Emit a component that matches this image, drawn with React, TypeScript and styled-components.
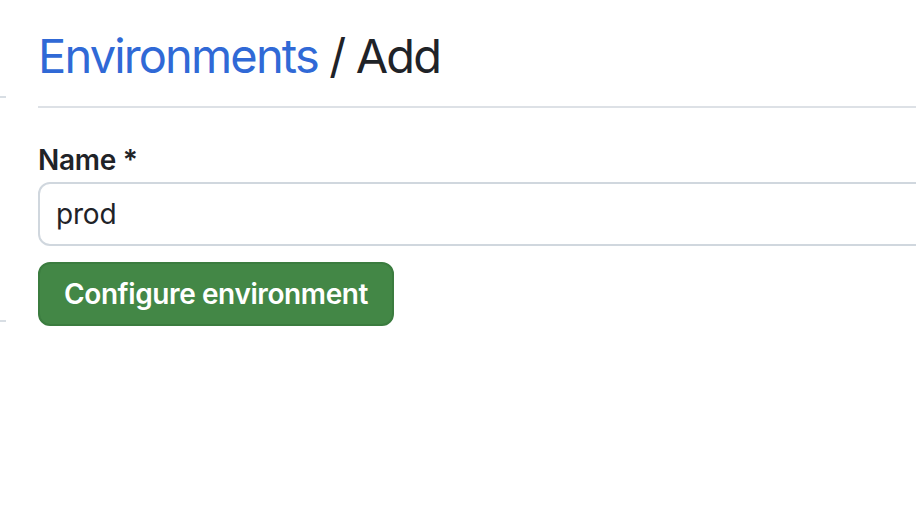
import React from "react";
import styled, { createGlobalStyle } from "styled-components";

const Global = createGlobalStyle`
  html, body { margin: 0; padding: 0; background: #ffffff; }
  body {
    font-family: Inter, "Noto Sans", "Liberation Sans", sans-serif;
    color: #1f2328;
    overflow: hidden;
  }
`;

const Layout = styled.div`
  display: grid;
  grid-template-columns: 6px 1fr;
  column-gap: 32px;
  width: 916px;
  height: 522px;
  overflow: hidden;
`;

const Sidebar = styled.aside`
  display: flex;
  flex-direction: column;
`;

const SideItem = styled.div<{ $h: number }>`
  height: ${(p) => p.$h}px;
  border-bottom: 2px solid #d8dee4;
`;

const Main = styled.main`
  display: flex;
  flex-direction: column;
  min-width: 0;
`;

const Subhead = styled.div`
  padding-top: 20px;
  padding-bottom: 14px;
  border-bottom: 2px solid #dde1e6;
  margin-bottom: 32px;
`;

const Heading = styled.h2`
  margin: 0;
  font-size: 47px;
  line-height: 72px;
  font-weight: 400;
  letter-spacing: -1.85px;
  color: #1f2328;
`;

const Crumb = styled.a`
  color: #3069d6;
  text-decoration: none;
`;

const Label = styled.label`
  display: block;
  font-size: 28px;
  line-height: 40px;
  font-weight: 600;
  letter-spacing: -0.3px;
  margin-bottom: 2px;
  color: #1f2328;
`;

const Input = styled.input`
  box-sizing: border-box;
  width: 1000px;
  height: 64px;
  padding: 0 16px;
  border: 2px solid #d0d7de;
  border-radius: 12px;
  font-family: inherit;
  font-size: 28px;
  letter-spacing: -0.2px;
  color: #1f2328;
  background: #ffffff;
  outline: none;
  margin-bottom: 16px;
`;

const Button = styled.button`
  box-sizing: border-box;
  align-self: flex-start;
  height: 64px;
  padding: 0 24px;
  border: 2px solid #3b7c3f;
  border-radius: 12px;
  background: #438746;
  color: #ffffff;
  font-family: inherit;
  font-size: 28px;
  font-weight: 600;
  letter-spacing: -0.4px;
  cursor: pointer;
`;

export default function App() {
  return (
    <>
      <Global />
      <Layout>
        <Sidebar>
          <SideItem $h={96} />
          <SideItem $h={222} />
        </Sidebar>
        <Main>
          <Subhead>
            <Heading>
              <Crumb href="#">Environments</Crumb> / Add
            </Heading>
          </Subhead>
          <Label htmlFor="env-name">Name *</Label>
          <Input id="env-name" defaultValue="prod" />
          <Button type="button">Configure environment</Button>
        </Main>
      </Layout>
    </>
  );
}
